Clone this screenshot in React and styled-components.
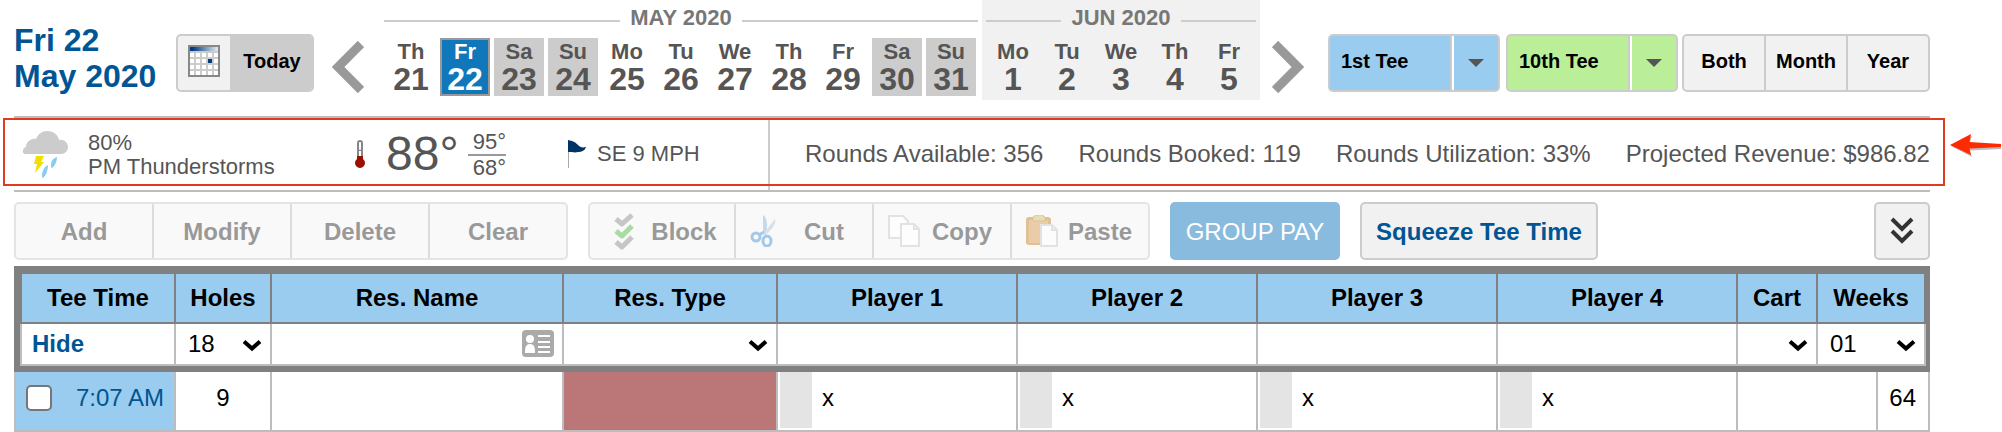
import React from "react";
import styled, { createGlobalStyle, css } from "styled-components";

const color = {
  brand: "#005594",
  text: "#555555",
  muted: "#999999",
  rule: "#bdbdbd",
  edge: "#cccccc",
  panel: "#f1f1f1",
  frame: "#808080",
  sky: "#99ccee",
  lime: "#bbee99",
  red: "#e03a20",
};

const GlobalStyle = createGlobalStyle`
  *, *::before, *::after { box-sizing: border-box; }
  body {
    margin: 0;
    background: #fff;
    font-family: "Liberation Sans", Arial, Helvetica, sans-serif;
    color: #000;
  }
  button, input, select { font: inherit; color: inherit; margin: 0; }
  button { padding: 0; border: 0; background: none; cursor: pointer; }
  svg { display: block; flex: none; }
`;

const Page = styled.main`
  padding: 0 72px 0 14px;
`;

/* ---------- date header ---------- */

const Header = styled.header`
  display: flex;
  align-items: flex-start;
  height: 116px;
  white-space: nowrap;
`;

const CurrentDate = styled.h1`
  flex: none;
  width: 162px;
  margin: 0;
  padding-top: 22px;
  font-size: 32px;
  line-height: 36px;
  color: ${color.brand};
`;

const ButtonGroup = styled.div`
  display: flex;
  flex: none;
  height: 58px;
  margin-top: 34px;
  border: 2px solid ${color.edge};
  border-radius: 5px;
  background: ${(p) => p.$fill || color.panel};
  overflow: hidden;
`;

const HeaderButton = styled.button`
  display: flex;
  align-items: center;
  justify-content: ${(p) => (p.$start ? "flex-start" : "center")};
  width: ${(p) => p.$width}px;
  padding: 0 ${(p) => (p.$start ? 11 : 0)}px 4px;
  font-size: 20px;
  font-weight: bold;
  background: ${(p) => p.$fill || "transparent"};
  & + & {
    border-left: 2px solid ${color.edge};
  }
`;

const SplitArrow = styled.button`
  display: flex;
  flex: 1;
  align-items: center;
  justify-content: center;
  border-left: 2px solid #fff;
  box-shadow: -2px 0 0 ${color.edge};
`;

const PageArrow = styled.button`
  flex: none;
  margin: 41px ${(p) => p.$after}px 0 ${(p) => p.$before}px;
`;

const Months = styled.div`
  display: flex;
  flex: none;
  gap: 4px;
`;

const MonthBlock = styled.section`
  padding: 6px ${(p) => (p.$shaded ? 4 : 0)}px 4px;
  background: ${(p) => (p.$shaded ? color.panel : "transparent")};
`;

const MonthTitle = styled.h2`
  display: flex;
  align-items: center;
  gap: 10px;
  margin: 0 0 8px;
  font-size: 22px;
  line-height: 24px;
  color: #777;
  &::before,
  &::after {
    content: "";
    flex: 1;
    height: 2px;
    margin-top: 6px;
    background: ${color.edge};
  }
`;

const Days = styled.div`
  display: flex;
  gap: 4px;
  padding: 0 2px;
`;

const Day = styled.button`
  width: 50px;
  border: 2px solid transparent;
  color: ${color.text};
  font-weight: bold;
  text-align: center;
  ${(p) => p.$weekend && css`
    background: ${color.edge};
    border-color: ${color.edge};
  `}
  ${(p) =>
    p.$selected &&
    css`
      background: #1177bb;
      border-color: ${color.muted};
      color: #fff;
    `}
`;

const DayName = styled.span`
  display: block;
  font-size: 22px;
  line-height: 24px;
`;

const DayNumber = styled.span`
  display: block;
  font-size: 32px;
  line-height: 30px;
`;

const TeeControls = styled.div`
  display: flex;
  flex: none;
  margin-left: auto;
`;

const TeeGroup = styled(ButtonGroup)`
  width: 172px;
  margin-right: ${(p) => p.$gap}px;
`;

/* ---------- weather and rounds ---------- */

const InfoBar = styled.section`
  position: relative;
  display: flex;
  height: 76px;
  border-top: 2px solid ${color.rule};
  border-bottom: 2px solid ${color.rule};
  color: ${color.text};
  font-size: 22px;
  line-height: 24px;
  white-space: nowrap;
`;

const Weather = styled.div`
  display: flex;
  flex: none;
  align-items: center;
  width: 754px;
  padding-left: 8px;
`;

const Conditions = styled.div`
  width: 266px;
  margin-left: 20px;
  padding-top: 2px;
`;

const Temperature = styled.div`
  width: 82px;
  margin-left: 20px;
  font-size: 48px;
  line-height: 72px;
`;

const TempRange = styled.div`
  width: 38px;
  margin-right: 62px;
  padding-top: 2px;
  text-align: right;
`;

const HighTemp = styled.div`
  border-bottom: 2px solid #999;
`;

const Wind = styled.div`
  margin-left: 9px;
`;

const Rounds = styled.div`
  display: flex;
  flex: 1;
  align-items: center;
  justify-content: space-between;
  padding-left: 35px;
  border-left: 2px solid ${color.edge};
  font-size: 24px;
`;

const Highlight = styled.div`
  position: absolute;
  inset: 0 -15px 4px -11px;
  border: 2px solid ${color.red};
  pointer-events: none;
`;

const Pointer = styled.svg`
  position: absolute;
  top: 14px;
  right: -72px;
`;

/* ---------- action toolbar ---------- */

const Toolbar = styled.div`
  display: flex;
  gap: 20px;
  padding: 10px 0 6px;
  font-size: 24px;
  white-space: nowrap;
`;

const ActionGroup = styled.div`
  display: flex;
  height: 58px;
  border: 2px solid #e4e4e4;
  border-radius: 5px;
  background: #f9f9f9;
`;

const Action = styled.button`
  display: flex;
  align-items: center;
  width: 138px;
  padding: 0 ${(p) => p.$after || 0}px 0 ${(p) => p.$before || 0}px;
  font-weight: bold;
  color: ${color.muted};
  & + & {
    border-left: 2px solid #dcdcdc;
  }
  &:first-child {
    width: ${(p) => p.$width || 136}px;
  }
`;

const ActionLabel = styled.span`
  flex: 1;
  padding-top: 2px;
  text-align: center;
`;

const PayButton = styled.button`
  width: 170px;
  height: 58px;
  padding-top: 2px;
  border-radius: 5px;
  background: #88bbdd;
  color: #fff;
`;

const OutlineButton = styled.button`
  display: flex;
  align-items: center;
  justify-content: center;
  width: ${(p) => p.$width}px;
  height: 58px;
  padding-top: 2px;
  border: 2px solid ${color.edge};
  border-radius: 5px;
  background: ${color.panel};
  font-weight: bold;
  color: ${color.brand};
  &:last-child {
    margin-left: auto;
    padding-top: 0;
  }
`;

/* ---------- tee sheet ---------- */

const Sheet = styled.table`
  width: 100%;
  table-layout: fixed;
  border-collapse: separate;
  border-spacing: 0;
  font-size: 24px;
  line-height: 28px;
  white-space: nowrap;
`;

const HeadCell = styled.th`
  height: 58px;
  padding: 0;
  border: solid ${color.frame};
  border-width: 8px 2px 2px 0;
  background: ${color.sky};
  &:first-child {
    border-left-width: 8px;
  }
  &:last-child {
    border-right-width: 6px;
  }
`;

const FilterCell = styled.td`
  height: 48px;
  padding: 0 2px 2px 0;
  border: solid ${color.frame};
  border-width: 0 0 6px;
  box-shadow: inset -2px -2px 0 ${color.rule};
  &:first-child {
    padding-left: 12px;
    border-left-width: 6px;
    box-shadow: inset -2px -2px 0 ${color.rule}, inset 2px 0 0 ${color.rule};
  }
  &:last-child {
    border-right-width: 4px;
  }
`;

const HideLink = styled.a`
  color: ${color.brand};
  font-weight: bold;
  text-decoration: none;
`;

const Field = styled.div`
  position: relative;
  display: flex;
  align-items: center;
  height: 40px;
  padding-right: ${(p) => p.$end || 0}px;
`;

const TextInput = styled.input`
  flex: 1;
  min-width: 0;
  width: 100%;
  height: 40px;
  padding: 0 8px;
  border: 0;
  background: transparent;
`;

const Select = styled.select`
  appearance: none;
  width: 100%;
  height: 40px;
  padding: 0 32px 0 12px;
  border: 0;
  background: transparent;
`;

const SelectArrow = styled.svg`
  position: absolute;
  top: 15px;
  right: 8px;
  pointer-events: none;
`;

const Cell = styled.td`
  height: 60px;
  padding: 12px ${(p) => (p.$right ? 12 : 0)}px 0 0;
  vertical-align: top;
  text-align: ${(p) => (p.$right ? "right" : "center")};
  border: solid ${color.rule};
  border-width: 0 2px 2px 0;
  background: ${(p) => p.$fill || "#fff"};
`;

const PlayerCell = styled(Cell)`
  padding: 0 0 0 2px;
`;

const Player = styled.div`
  display: flex;
  gap: 10px;
  text-align: left;
`;

const PlayerTag = styled.span`
  width: 32px;
  height: 56px;
  background: #e4e4e4;
`;

const PlayerName = styled.span`
  padding-top: 12px;
`;

const TimeCell = styled(Cell)`
  border-left-width: 2px;
  background: ${color.sky};
`;

const TimeLabel = styled.label`
  display: flex;
  align-items: center;
  justify-content: space-between;
  padding: 0 10px;
  color: ${color.brand};
`;

const Checkbox = styled.input`
  appearance: none;
  width: 26px;
  height: 26px;
  border: 2px solid #767676;
  border-radius: 5px;
  background: #fff;
`;

/* ---------- drawings ---------- */

const CalendarIcon = () => (
  <svg width="32" height="32" viewBox="0 0 32 32">
    <defs>
      <linearGradient id="calBar" x1="0" x2="1">
        <stop offset="0.1" stopColor="#003b80" />
        <stop offset="1" stopColor="#e8edf4" />
      </linearGradient>
    </defs>
    <rect x="1" y="1" width="30" height="30" fill="#fff" stroke="#888" strokeWidth="2" />
    <rect x="2" y="2" width="28" height="4" fill="url(#calBar)" />
    <path d="M2 7h28M2 13h28M2 19h28M2 25h28M7 7v23M13 7v23M19 7v23M25 7v23" stroke="#ccc" strokeWidth="2" />
    <rect x="20" y="14" width="4" height="4" fill="#003b80" />
  </svg>
);

const PageArrowIcon = ({ next }) => (
  <svg width="32" height="52" viewBox="0 0 32 52">
    <path d={next ? "M3 3l23 23L3 49" : "M29 3L6 26l23 23"} fill="none" stroke="#999" strokeWidth="9" />
  </svg>
);

const CaretIcon = () => (
  <svg width="16" height="8" viewBox="0 0 16 8">
    <path d="M0 0h16L8 8z" fill="#555" />
  </svg>
);

const StormIcon = () => (
  <svg width="46" height="48" viewBox="0 0 46 48">
    <path
      d="M3 24C0 24 0 18 4 17c0-5 5-9 10-8C16 4 20 1 25 1c7 0 11 4 12 9 5-1 9 3 9 7 0 4-3 7-7 7z"
      fill="#ccc"
    />
    <path d="M14 26h8l-3 6h3L13 43l2-9h-3z" fill="#f0e000" />
    <path d="M35 27c-3 1-6 3-6 8 0 2 0 3 1 3 3-2 5-7 5-11z" fill="#88ccee" />
    <path d="M26 35c-3 1-5 4-6 9 0 2 0 4 1 4 3-2 5-8 5-13z" fill="#88ccee" />
  </svg>
);

const ThermometerIcon = () => (
  <svg width="12" height="28" viewBox="0 0 12 28">
    <rect x="3" y="0" width="6" height="22" rx="3" fill="#888" />
    <rect x="5" y="2" width="2" height="8" rx="1" fill="#fff" />
    <rect x="5" y="11" width="2" height="5" fill="#fff" />
    <path d="M3 16h6v3a5 5 0 1 1-6 0z" fill="#981000" />
  </svg>
);

const FlagIcon = () => (
  <svg width="20" height="28" viewBox="0 0 20 28">
    <path d="M0.5 0v28" stroke="#aaa" />
    <path d="M0 0c5 1 7 2 10 5 2 2 4 3 8 2-1 4-5 5-8 5-3 1-6 0-10 0z" fill="#003366" />
  </svg>
);

const PointerArrow = () => (
  <Pointer width="56" height="28" viewBox="0 0 56 28" aria-hidden="true">
    <path d="M5 14L26 4 23.500 11.500 55 14 55 17 23.500 18.500 26 25z" fill="#bbb" />
    <path d="M4 13L25 2 23.500 10 55 12 55 15 23.500 16.500 25 23z" fill="#ff2a00" />
  </Pointer>
);

const BlockIcon = () => (
  <svg width="20" height="38" viewBox="0 0 20 38">
    <g fill="none" strokeWidth="5" strokeLinejoin="round">
      <path d="M2 7l6 5L18 3" stroke="#c6c6c6" />
      <path d="M2 19l6 5 10-10" stroke="#a9dba6" />
      <path d="M2 30l6 5 10-10" stroke="#c6c6c6" />
    </g>
  </svg>
);

const CutIcon = () => (
  <svg width="32" height="32" viewBox="0 0 32 32">
    <path d="M13 19L13 0c4 2 5 10 3 20z" fill="#c6d9ea" />
    <path d="M13 19L25 4c2 4-4 12-9 15z" fill="#d5e2ee" />
    <g fill="none" stroke="#a5c8e8" strokeWidth="3">
      <path d="M14 17l-5 3" />
      <ellipse cx="6" cy="22" rx="4" ry="4" />
      <ellipse cx="17" cy="26" rx="4" ry="5" />
    </g>
  </svg>
);

const CopyIcon = () => (
  <svg width="32" height="32" viewBox="0 0 32 32">
    <g fill="#fdfdfd" stroke="#e2e2e2" strokeWidth="2">
      <path d="M1 1h14l5 5v17H1z" />
      <path d="M13 9h13l5 5v17H13z" />
      <path d="M26 9v5h5" fill="none" />
    </g>
  </svg>
);

const PasteIcon = () => (
  <svg width="32" height="32" viewBox="0 0 32 32">
    <rect x="0" y="2" width="25" height="28" rx="3" fill="#e2c096" />
    <rect x="3" y="5" width="19" height="23" fill="#eaccaa" />
    <path d="M7 2l3-2h6l3 2v4H7z" fill="#e8dcb0" stroke="#d5c79a" />
    <path d="M15 10h11l5 5v16H15z" fill="#fcfcfc" stroke="#e2e2e2" strokeWidth="2" />
    <path d="M26 10v5h5" fill="none" stroke="#e2e2e2" strokeWidth="2" />
  </svg>
);

const DoubleChevronIcon = () => (
  <svg width="24" height="28" viewBox="0 0 24 28">
    <path d="M2 2l10 10L22 2M2 14l10 10 10-10" fill="none" stroke="#333" strokeWidth="4" />
  </svg>
);

const CardIcon = () => (
  <svg width="32" height="28" viewBox="0 0 32 28">
    <rect width="32" height="27" rx="4" fill="#aaa" />
    <circle cx="8" cy="9" r="4" fill="#fff" />
    <path d="M3 23c0-6 1-9 5-9s5 3 5 9z" fill="#fff" />
    <path d="M16 6h12M16 12h12M16 17h12M16 22h12" stroke="#fff" strokeWidth="2" />
  </svg>
);

const DownArrow = () => (
  <SelectArrow width="20" height="13" viewBox="0 0 20 13" aria-hidden="true">
    <path d="M2 2.500l8 7 8-7" fill="none" stroke="#000" strokeWidth="4" />
  </SelectArrow>
);

/* ---------- data ---------- */

const months = [
  {
    title: "MAY 2020",
    days: [
      ["Th", 21], ["Fr", 22], ["Sa", 23], ["Su", 24], ["Mo", 25], ["Tu", 26],
      ["We", 27], ["Th", 28], ["Fr", 29], ["Sa", 30], ["Su", 31],
    ],
  },
  {
    title: "JUN 2020",
    shaded: true,
    days: [["Mo", 1], ["Tu", 2], ["We", 3], ["Th", 4], ["Fr", 5]],
  },
];

const players = [1, 2, 3, 4];

const stats = [
  "Rounds Available: 356",
  "Rounds Booked: 119",
  "Rounds Utilization: 33%",
  "Projected Revenue: $986.82",
];

const columns = [162, 96, 292, 214, null, null, null, null, 80, 60, 52];

const TeeSelector = ({ label, fill, gap }) => (
  <TeeGroup $fill={fill} $gap={gap}>
    <HeaderButton $width={122} $start>{label}</HeaderButton>
    <SplitArrow aria-label={`${label} options`}>
      <CaretIcon />
    </SplitArrow>
  </TeeGroup>
);

const SelectField = ({ label, value }) => (
  <Field>
    <Select aria-label={label} defaultValue={value}>
      <option value={value}>{value}</option>
    </Select>
    <DownArrow />
  </Field>
);

export default function App() {
  return (
    <>
      <GlobalStyle />
      <Page>
        <Header>
          <CurrentDate>
            Fri 22
            <br />
            May 2020
          </CurrentDate>
          <ButtonGroup>
            <HeaderButton $width={52} aria-label="Open calendar">
              <CalendarIcon />
            </HeaderButton>
            <HeaderButton $width={82} $fill={color.edge}>Today</HeaderButton>
          </ButtonGroup>
          <PageArrow $before={18} $after={20} aria-label="Previous days">
            <PageArrowIcon />
          </PageArrow>
          <Months>
            {months.map((m) => (
              <MonthBlock key={m.title} $shaded={m.shaded}>
                <MonthTitle>{m.title}</MonthTitle>
                <Days>
                  {m.days.map(([name, num]) => (
                    <Day key={num} $weekend={name[0] === "S"} $selected={num === 22}>
                      <DayName>{name}</DayName>
                      <DayNumber>{num}</DayNumber>
                    </Day>
                  ))}
                </Days>
              </MonthBlock>
            ))}
          </Months>
          <PageArrow $before={12} $after={0} aria-label="Next days">
            <PageArrowIcon next />
          </PageArrow>
          <TeeControls>
            <TeeSelector label="1st Tee" fill={color.sky} gap={6} />
            <TeeSelector label="10th Tee" fill={color.lime} gap={4} />
            <ButtonGroup>
              <HeaderButton $width={80}>Both</HeaderButton>
              <HeaderButton $width={82}>Month</HeaderButton>
              <HeaderButton $width={82}>Year</HeaderButton>
            </ButtonGroup>
          </TeeControls>
        </Header>

        <InfoBar>
          <Weather>
            <StormIcon />
            <Conditions>
              80%
              <br />
              PM Thunderstorms
            </Conditions>
            <ThermometerIcon />
            <Temperature>88°</Temperature>
            <TempRange>
              <HighTemp>95°</HighTemp>
              68°
            </TempRange>
            <FlagIcon />
            <Wind>SE 9 MPH</Wind>
          </Weather>
          <Rounds>
            {stats.map((s) => (
              <span key={s}>{s}</span>
            ))}
          </Rounds>
          <Highlight />
          <PointerArrow />
        </InfoBar>

        <Toolbar>
          <ActionGroup>
            {["Add", "Modify", "Delete", "Clear"].map((label) => (
              <Action key={label}>
                <ActionLabel>{label}</ActionLabel>
              </Action>
            ))}
          </ActionGroup>
          <ActionGroup>
            <Action $width={144} $before={24}>
              <BlockIcon />
              <ActionLabel>Block</ActionLabel>
            </Action>
            <Action $before={14} $after={6}>
              <CutIcon />
              <ActionLabel>Cut</ActionLabel>
            </Action>
            <Action $before={14} $after={6}>
              <CopyIcon />
              <ActionLabel>Copy</ActionLabel>
            </Action>
            <Action $before={14} $after={6}>
              <PasteIcon />
              <ActionLabel>Paste</ActionLabel>
            </Action>
          </ActionGroup>
          <PayButton>GROUP PAY</PayButton>
          <OutlineButton $width={238}>Squeeze Tee Time</OutlineButton>
          <OutlineButton $width={56} aria-label="More actions">
            <DoubleChevronIcon />
          </OutlineButton>
        </Toolbar>

        <Sheet>
          <colgroup>
            {columns.map((w, i) => (
              <col key={i} width={w || undefined} />
            ))}
          </colgroup>
          <thead>
            <tr>
              <HeadCell>Tee Time</HeadCell>
              <HeadCell>Holes</HeadCell>
              <HeadCell>Res. Name</HeadCell>
              <HeadCell>Res. Type</HeadCell>
              {players.map((n) => (
                <HeadCell key={n}>Player {n}</HeadCell>
              ))}
              <HeadCell>Cart</HeadCell>
              <HeadCell colSpan={2}>Weeks</HeadCell>
            </tr>
          </thead>
          <tbody>
            <tr>
              <FilterCell>
                <HideLink href="#hide">Hide</HideLink>
              </FilterCell>
              <FilterCell>
                <SelectField label="Holes" value="18" />
              </FilterCell>
              <FilterCell>
                <Field $end={8}>
                  <TextInput type="text" aria-label="Res. Name" />
                  <CardIcon />
                </Field>
              </FilterCell>
              <FilterCell>
                <SelectField label="Res. Type" value="" />
              </FilterCell>
              {players.map((n) => (
                <FilterCell key={n}>
                  <Field>
                    <TextInput type="text" aria-label={`Player ${n}`} />
                  </Field>
                </FilterCell>
              ))}
              <FilterCell>
                <SelectField label="Cart" value="" />
              </FilterCell>
              <FilterCell colSpan={2}>
                <SelectField label="Weeks" value="01" />
              </FilterCell>
            </tr>
            <tr>
              <TimeCell>
                <TimeLabel>
                  <Checkbox type="checkbox" />
                  7:07 AM
                </TimeLabel>
              </TimeCell>
              <Cell>9</Cell>
              <Cell />
              <Cell $fill="#bb7777" />
              {players.map((n) => (
                <PlayerCell key={n}>
                  <Player>
                    <PlayerTag />
                    <PlayerName>x</PlayerName>
                  </Player>
                </PlayerCell>
              ))}
              <Cell colSpan={2} />
              <Cell $right>64</Cell>
            </tr>
          </tbody>
        </Sheet>
      </Page>
    </>
  );
}
